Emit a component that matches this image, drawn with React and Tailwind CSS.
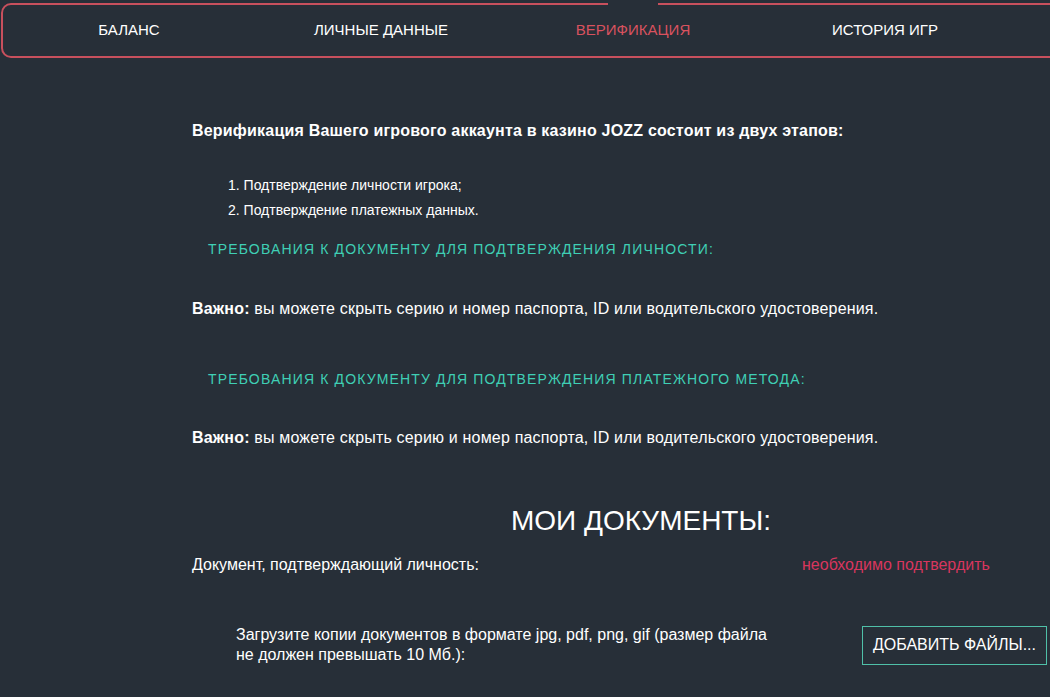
import React from 'react';

// Verification tab of the player cabinet
const TABS = ['БАЛАНС', 'ЛИЧНЫЕ ДАННЫЕ', 'ВЕРИФИКАЦИЯ', 'ИСТОРИЯ ИГР'];
const ACTIVE = 2;

function Important() {
  return (
    <p className="text-[16px] leading-[20px] tracking-[0.18px] text-white">
      <b>Важно:</b> вы можете скрыть серию и номер паспорта, ID или водительского удостоверения.
    </p>
  );
}

export default function App() {
  return (
    <div
      className="min-h-[697px] w-[1050px] overflow-hidden bg-[#272f38] text-white"
      style={{ fontFamily: '"Liberation Sans", Arial, sans-serif' }}
    >
      {/* Tabs */}
      <div className="pt-[3px] pl-[1px]">
        <div className="relative flex h-[55px] w-[1080px] items-center rounded-[10px] border-2 border-[#c8505d]">
          {/* break in the top border above the active tab */}
          <span className="absolute -top-[2px] left-[605px] h-[2px] w-[50px] bg-[#272f38]" />
          {TABS.map((t, i) => (
            <div
              key={t}
              className={
                'flex w-[252px] items-center justify-center text-[15px] ' +
                (i === ACTIVE ? 'text-[#d9525f]' : 'text-white')
              }
            >
              {t}
            </div>
          ))}
        </div>
      </div>

      {/* Content */}
      <div className="ml-[192px] w-[898px]">
        <h2 className="mt-[63px] text-[16px] leading-[20px] font-bold tracking-[0.2px]">
          Верификация Вашего игрового аккаунта в казино JOZZ состоит из двух этапов:
        </h2>
        <ol className="mt-[32px] ml-[36px] list-decimal list-inside text-[14px] leading-[25px]">
          <li>Подтверждение личности игрока;</li>
          <li>Подтверждение платежных данных.</li>
        </ol>

        <h3 className="mt-[17px] ml-[16px] text-[14px] leading-[18px] tracking-[1.15px] text-[#3fcfb5]">
          ТРЕБОВАНИЯ К ДОКУМЕНТУ ДЛЯ ПОДТВЕРЖДЕНИЯ ЛИЧНОСТИ:
        </h3>
        <div className="mt-[41px]">
          <Important />
        </div>

        <h3 className="mt-[51px] ml-[16px] text-[14px] leading-[18px] tracking-[1.15px] text-[#3fcfb5]">
          ТРЕБОВАНИЯ К ДОКУМЕНТУ ДЛЯ ПОДТВЕРЖДЕНИЯ ПЛАТЕЖНОГО МЕТОДА:
        </h3>
        <div className="mt-[40px]">
          <Important />
        </div>

        <h1 className="mt-[57px] text-center text-[28px] leading-[32px]">МОИ ДОКУМЕНТЫ:</h1>

        <div className="mt-[18px] flex text-[16px] leading-[20px]">
          <span className="w-[610px]">Документ, подтверждающий личность:</span>
          <span className="text-[#d8365e]">необходимо подтвердить</span>
        </div>

        <div className="mt-[50px] flex items-center">
          <p className="ml-[44px] w-[540px] text-[16px] leading-[20px]">
            Загрузите копии документов в формате jpg, pdf, png, gif (размер файла не должен превышать 10 Мб.):
          </p>
          <button className="ml-[86px] h-[39px] w-[185px] border border-[#4fc0a8] text-[16px] text-white">
            ДОБАВИТЬ ФАЙЛЫ...
          </button>
        </div>
      </div>
    </div>
  );
}
